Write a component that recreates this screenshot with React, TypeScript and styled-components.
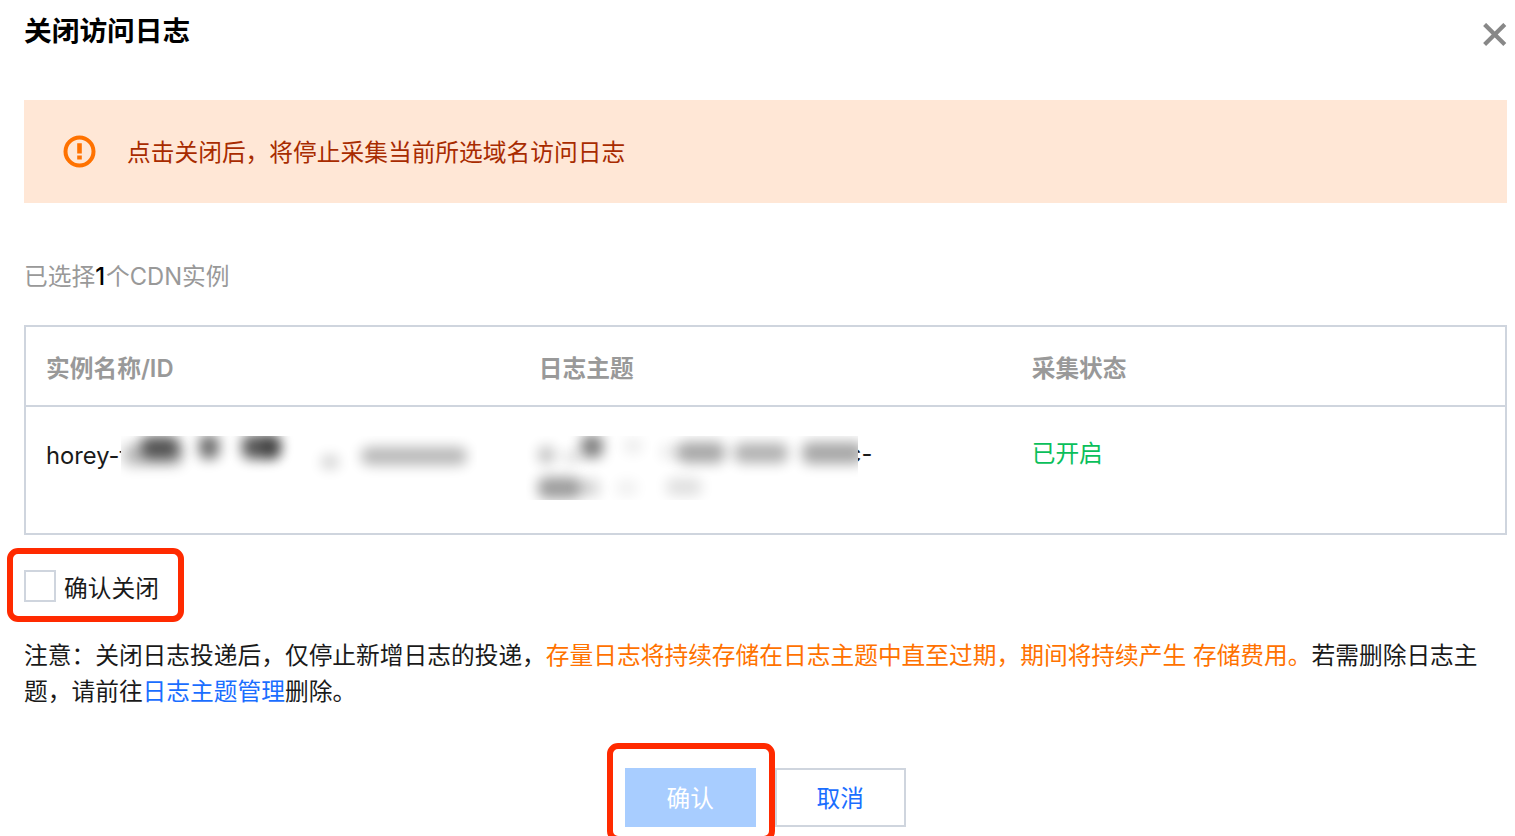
import React from "react";
import styled, { createGlobalStyle } from "styled-components";

interface Smudge {
  x: number;
  y: number;
  w: number;
  h: number;
  o: number;
}

const nameSmudges: Smudge[] = [
  { x: 2, y: 8, w: 60, h: 22, o: 0.26 },
  { x: 20, y: 0, w: 38, h: 22, o: 0.6 },
  { x: 78, y: -1, w: 20, h: 24, o: 0.58 },
  { x: 121, y: -1, w: 38, h: 24, o: 0.66 },
  { x: 143, y: 2, w: 15, h: 18, o: 0.4 },
  { x: 200, y: 19, w: 18, h: 14, o: 0.18 },
  { x: 240, y: 11, w: 106, h: 18, o: 0.28 },
];

const topicSmudges: Smudge[] = [
  { x: 12, y: 10, w: 17, h: 18, o: 0.24 },
  { x: 36, y: 15, w: 20, h: 12, o: 0.12 },
  { x: 55, y: -1, w: 22, h: 23, o: 0.5 },
  { x: 97, y: 2, w: 20, h: 16, o: 0.07 },
  { x: 134, y: 8, w: 18, h: 16, o: 0.08 },
  { x: 151, y: 6, w: 48, h: 21, o: 0.34 },
  { x: 208, y: 7, w: 54, h: 20, o: 0.3 },
  { x: 276, y: 6, w: 62, h: 22, o: 0.34 },
  { x: 12, y: 41, w: 42, h: 22, o: 0.38 },
  { x: 50, y: 43, w: 24, h: 18, o: 0.16 },
  { x: 90, y: 44, w: 22, h: 16, o: 0.06 },
  { x: 140, y: 42, w: 36, h: 18, o: 0.12 },
];

function Mask({ width, height, items }: { width: number; height: number; items: Smudge[] }) {
  return (
    <MaskBox $width={width} $height={height}>
      {items.map((s, i) => (
        <Blot key={i} style={{ left: s.x, top: s.y, width: s.w, height: s.h, opacity: s.o }} />
      ))}
    </MaskBox>
  );
}

function App() {
  return (
    <>
      <GlobalStyle />
      <Dialog>
        <Header>
          <Title>关闭访问日志</Title>
          <CloseButton aria-label="关闭">
            <svg width="24" height="24" viewBox="0 0 24 24" fill="none">
              <path d="M1.6 1.4 21.8 21.6M21.8 1.4 1.6 21.6" stroke="#888" strokeWidth="4.2" />
            </svg>
          </CloseButton>
        </Header>
        <Alert>
          <svg width="33" height="33" viewBox="0 0 33 33" fill="none">
            <circle cx="16.5" cy="16.5" r="14" stroke="#ff7200" strokeWidth="4" />
            <path d="M16.5 8.2V18.6M16.5 20.4V24.4" stroke="#ff7200" strokeWidth="4.6" />
          </svg>
          <AlertText>点击关闭后，将停止采集当前所选域名访问日志</AlertText>
        </Alert>
        <Summary>
          已选择<strong>1</strong>个CDN实例
        </Summary>
        <Table>
          <HeadRow>
            <div>实例名称/ID</div>
            <div>日志主题</div>
            <div>采集状态</div>
          </HeadRow>
          <BodyRow>
            <NameCell>
              <Lead>horey-t</Lead>
              <Mask width={356} height={50} items={nameSmudges} />
            </NameCell>
            <TopicCell>
              <Mask width={332} height={64} items={topicSmudges} />
              <Tail>c-</Tail>
            </TopicCell>
            <StatusCell>已开启</StatusCell>
          </BodyRow>
        </Table>
        <CheckLine>
          <CheckBox />
          <CheckText>确认关闭</CheckText>
          <CheckHighlight />
        </CheckLine>
        <Note>
          注意：关闭日志投递后，仅停止新增日志的投递，
          <Warn>存量日志将持续存储在日志主题中直至过期，期间将持续产生 存储费用。</Warn>
          若需删除日志主
          <br />
          题，请前往<Link>日志主题管理</Link>删除。
        </Note>
        <Footer>
          <ConfirmWrap>
            <Button $primary>确认</Button>
            <ConfirmHighlight />
          </ConfirmWrap>
          <Button>取消</Button>
        </Footer>
      </Dialog>
    </>
  );
}
export default App;

const GlobalStyle = createGlobalStyle`
  * {
    box-sizing: border-box;
  }
  body {
    margin: 0;
    background: #fff;
    overflow: hidden;
  }
`;
const Dialog = styled.div`
  width: 1515px;
  height: 836px;
  padding: 0 8.5px 0 24px;
  overflow: hidden;
  font-family: Inter, "Noto Sans CJK SC", sans-serif;
  font-size: 23.73px;
  color: #1a1a1a;
`;
const Header = styled.div`
  display: flex;
  justify-content: space-between;
  height: 100px;
  padding-top: 11px;
`;
const Title = styled.h3`
  margin: 0;
  font-size: 27.7px;
  line-height: 40px;
  font-weight: 600;
  color: #000;
`;
const CloseButton = styled.button`
  width: 24px;
  height: 24px;
  margin-top: 12px;
  padding: 0;
  border: none;
  background: transparent;
  svg {
    display: block;
  }
`;
const Alert = styled.div`
  display: flex;
  align-items: center;
  gap: 31px;
  height: 102.5px;
  padding-left: 39px;
  background: #ffe7d6;
  color: #a82b00;
`;
const AlertText = styled.span`
  padding-bottom: 2px;
`;
const Summary = styled.div`
  padding-top: 56.5px;
  height: 122.5px;
  line-height: 36px;
  color: #999;
  strong {
    margin-right: 1px;
    font-weight: 500;
    color: #000;
  }
`;
const Table = styled.div`
  height: 210px;
  border: 2px solid #cfd5de;
`;
const HeadRow = styled.div`
  display: grid;
  grid-template-columns: repeat(3, 1fr);
  height: 80px;
  border-bottom: 2px solid #cfd5de;
  line-height: 83px;
  font-weight: 600;
  color: #999;
  div {
    padding-left: 20px;
  }
`;
const BodyRow = styled.div`
  display: grid;
  grid-template-columns: repeat(3, 1fr);
  line-height: 36px;
`;
const NameCell = styled.div`
  display: flex;
  padding: 29px 0 0 20px;
  line-height: 40px;
`;
/* the last letter sits mostly under the mask */
const Lead = styled.span`
  margin-right: -6.5px;
`;
const TopicCell = styled.div`
  display: flex;
  padding: 29px 0 0 7px;
`;
const StatusCell = styled.div`
  padding: 29px 0 0 20px;
  color: #0abf5b;
`;
const MaskBox = styled.div<{ $width: number; $height: number }>`
  position: relative;
  z-index: 1;
  flex: none;
  width: ${(p) => p.$width}px;
  height: ${(p) => p.$height}px;
  overflow: hidden;
  background: #fff;
`;
const Blot = styled.span`
  position: absolute;
  border-radius: 8px;
  background: #000;
  filter: blur(6.5px);
`;
/* only the right edge of the letter shows past the mask */
const Tail = styled.span`
  margin-left: -10px;
`;
const CheckLine = styled.label`
  position: relative;
  display: flex;
  align-items: center;
  gap: 8px;
  width: 160px;
  height: 102px;
`;
const CheckBox = styled.span`
  width: 32px;
  height: 32px;
  border: 2px solid #cfd5de;
`;
const CheckText = styled.span`
  padding-top: 1px;
`;
const Highlight = styled.div`
  position: absolute;
  border: 6px solid #ff2a00;
  border-radius: 11px;
`;
const CheckHighlight = styled(Highlight)`
  top: 13px;
  left: -17px;
  width: 177px;
  height: 74px;
`;
const Note = styled.p`
  margin: 0;
  padding-top: 1px;
  line-height: 35.6px;
  white-space: nowrap;
`;
const Warn = styled.span`
  color: #ff7200;
`;
const Link = styled.a`
  color: #1a6eff;
`;
const Footer = styled.div`
  display: flex;
  justify-content: center;
  gap: 19.5px;
  margin-top: 58.4px;
`;
const ConfirmWrap = styled.div`
  position: relative;
  z-index: 1;
`;
const ConfirmHighlight = styled(Highlight)`
  top: -24.5px;
  left: -18px;
  width: 168px;
  height: 99px;
`;
const Button = styled.button<{ $primary?: boolean }>`
  display: block;
  width: 130.5px;
  height: 59.5px;
  padding: 0;
  border: 2px solid ${(p) => (p.$primary ? "#a8cdff" : "#cfd5de")};
  background: ${(p) => (p.$primary ? "#a8cdff" : "#fff")};
  color: ${(p) => (p.$primary ? "#fff" : "#1a6eff")};
  font-family: inherit;
  font-size: 23.7px;
`;
